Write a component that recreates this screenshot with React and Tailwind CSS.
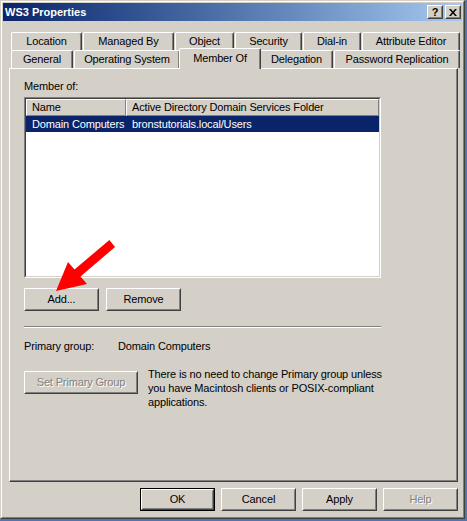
import React from 'react';

function Button({ label, className = '', disabled = false, primary = false }) {
  return (
    <div className={`h-[23px] ${primary ? 'border border-black' : ''} ${className}`}>
      <div className="h-full w-full border border-t-white border-l-white border-r-[#404040] border-b-[#404040]">
        <div className="flex h-full w-full items-center justify-center border border-t-[#d4d0c8] border-l-[#d4d0c8] border-r-[#808080] border-b-[#808080]">
          <span className={disabled ? 'whitespace-nowrap text-[#808080] [text-shadow:1px_1px_0_#fff]' : 'whitespace-nowrap text-black'}>{label}</span>
        </div>
      </div>
    </div>
  );
}

function Tab({ label, w }) {
  return (
    <div
      style={{ width: w }}
      className="flex h-full shrink-0 items-center justify-center whitespace-nowrap rounded-t-[2px] border-l border-t border-l-white border-t-white border-r border-r-[#404040] shadow-[inset_-1px_0_0_#808080]"
    >
      {label}
    </div>
  );
}

function TitleButton({ children }) {
  return (
    <div className="h-[14px] w-[16px] border border-t-white border-l-white border-r-[#404040] border-b-[#404040] bg-[#d4d0c8]">
      <div className="flex h-full w-full items-center justify-center border border-t-[#d4d0c8] border-l-[#d4d0c8] border-r-[#808080] border-b-[#808080]">
        {children}
      </div>
    </div>
  );
}

export default function App() {
  return (
    <div className="relative h-[521px] w-[467px] overflow-hidden bg-[#4f76b0] text-[11px] leading-[13px] tracking-[-0.15px] text-black [font-family:'Liberation_Sans',Arial,sans-serif]">
      {/* window frame */}
      <div className="h-[519px] w-[465px] border border-t-[#d4d0c8] border-l-[#d4d0c8] border-r-[#404040] border-b-[#404040]">
        <div className="h-full w-full border border-t-white border-l-white border-r-[#808080] border-b-[#808080] bg-[#d4d0c8] p-px">
          {/* title bar */}
          <div className="flex h-[18px] items-center justify-between bg-gradient-to-r from-[#0a246a] to-[#a6caf0] pl-[2px] pr-[1px]">
            <span className="font-bold tracking-normal text-white">WS3 Properties</span>
            <div className="flex gap-[2px]">
              <TitleButton>
                <span className="text-[11px] font-bold leading-none">?</span>
              </TitleButton>
              <TitleButton>
                <svg width="8" height="7" viewBox="0 0 8 7">
                  <path d="M0 0h2l2 2.5L6 0h2L5 3.5 8 7H6L4 4.5 2 7H0l3-3.5z" fill="#000" />
                </svg>
              </TitleButton>
            </div>
          </div>

          {/* tabs */}
          <div className="mt-[11px] pl-[8px]">
            <div className="flex h-[18px] gap-[1px]">
              <Tab label="Location" w={71} />
              <Tab label="Managed By" w={91} />
              <Tab label="Object" w={59} />
              <Tab label="Security" w={67} />
              <Tab label="Dial-in" w={58} />
              <Tab label="Attribute Editor" w={98} />
            </div>
            <div className="flex h-[18px] gap-[1px]">
              <Tab label="General" w={62} />
              <Tab label="Operating System" w={106} />
              <div className="relative z-10 -mx-[2px] -mt-[2px] flex h-[21px] w-[82px] shrink-0 items-start justify-center whitespace-nowrap rounded-t-[2px] border-l border-t border-l-white border-t-white border-r border-r-[#404040] bg-[#d4d0c8] pt-[3px] shadow-[inset_-1px_0_0_#808080]">
                Member Of
              </div>
              <Tab label="Delegation" w={73} />
              <Tab label="Password Replication" w={126} />
            </div>
          </div>

          {/* panel */}
          <div className="ml-[6px] h-[414px] w-[449px] border border-t-white border-l-white border-r-[#404040] border-b-[#404040] shadow-[inset_-1px_-1px_0_#808080]">
            <div className="pl-[14px]">
              <div className="mt-[11px]">Member of:</div>

              {/* list view */}
              <div className="mt-[4px] h-[181px] w-[357px] border border-t-[#808080] border-l-[#808080] border-r-white border-b-white">
                <div className="h-full w-full border border-t-[#404040] border-l-[#404040] border-r-[#d4d0c8] border-b-[#d4d0c8] bg-white">
                  <div className="flex h-[17px]">
                    <div className="flex w-[100px] shrink-0 items-center border border-t-white border-l-white border-r-[#808080] border-b-[#808080] bg-[#d4d0c8] pl-[5px]">
                      Name
                    </div>
                    <div className="flex flex-1 items-center whitespace-nowrap border border-t-white border-l-white border-r-[#808080] border-b-[#808080] bg-[#d4d0c8] pl-[5px]">
                      Active Directory Domain Services Folder
                    </div>
                  </div>
                  <div className="flex h-[16px] items-center whitespace-nowrap bg-[#0a246a] text-white">
                    <div className="w-[100px] shrink-0 pl-[6px]">Domain Computers</div>
                    <div className="pl-[6px]">bronstutorials.local/Users</div>
                  </div>
                </div>
              </div>

              <div className="mt-[10px] flex gap-[7px]">
                <Button label="Add..." className="w-[75px]" />
                <Button label="Remove" className="w-[75px]" />
              </div>

              <div className="mt-[15px] h-[2px] w-[357px] border-t border-t-[#808080] border-b border-b-white" />

              <div className="mt-[12px] flex">
                <div className="w-[94px]">Primary group:</div>
                <div>Domain Computers</div>
              </div>

              <div className="mt-[18px] flex items-start gap-[10px]">
                <Button label="Set Primary Group" disabled className="w-[114px]" />
                <p className="-mt-[4px] whitespace-nowrap leading-[14px]">
                  There is no need to change Primary group unless
                  <br />
                  you have Macintosh clients or POSIX-compliant
                  <br />
                  applications.
                </p>
              </div>
            </div>
          </div>

          {/* dialog buttons */}
          <div className="ml-[137px] mt-[6px] flex gap-[6px]">
            <Button label="OK" primary className="w-[75px]" />
            <Button label="Cancel" className="w-[75px]" />
            <Button label="Apply" className="w-[75px]" />
            <Button label="Help" disabled className="w-[75px]" />
          </div>
        </div>
      </div>

      {/* red arrow annotation */}
      <svg className="pointer-events-none absolute left-0 top-0" width="467" height="521">
        <polygon
          points="56,291 68,262 74.5,269.5 109.4,240 115,247 80.5,276.5 87,284"
          fill="#ff0000"
        />
      </svg>
    </div>
  );
}
